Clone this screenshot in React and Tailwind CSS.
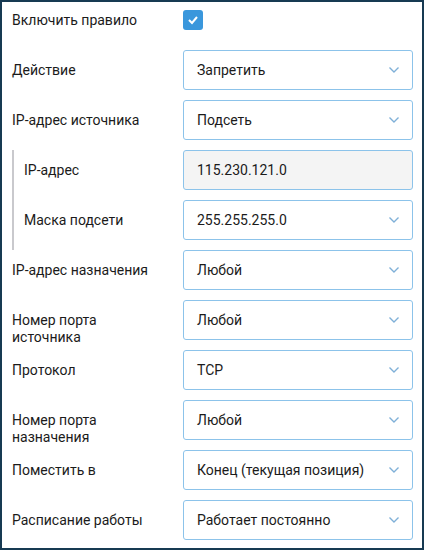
import React from 'react'

const Chevron = () => (
  <svg width="12" height="8" viewBox="0 0 12 8" className="shrink-0">
    <polyline points="1.5,1.5 6,6 10.5,1.5" fill="none" stroke="#7fb0d8" strokeWidth="1.4" />
  </svg>
)

const Select = ({ value, disabled }) => (
  <div
    className={`flex h-10 flex-1 items-center justify-between rounded-[3px] border border-[#8cc3ea] pl-[13px] pr-[12px] ${
      disabled ? 'bg-[#f4f4f4]' : 'bg-white'
    }`}
  >
    <span className="text-[14px] text-[#1b1b1b]">{value}</span>
    {!disabled && <Chevron />}
  </div>
)

const Row = ({ label, value, disabled, labelWidth = 'w-[171px]' }) => (
  <div className="flex h-[50px] items-start">
    <div className={`${labelWidth} shrink-0 pr-[16px] pt-[12px] text-[14px] leading-[17px] text-[#1b1b1b]`}>
      {label}
    </div>
    <Select value={value} disabled={disabled} />
  </div>
)

const App = () => {
  return (
    <div
      className="h-[550px] w-[424px] overflow-hidden border-2 border-[#173a52] bg-white pl-[10px] pr-[9px] pt-2"
      style={{ fontFamily: 'Roboto, "Noto Sans", sans-serif' }}
    >
      <div className="flex h-[40px] items-start">
        <div className="w-[171px] shrink-0 pt-[2px] text-[14px] leading-[17px] text-[#1b1b1b]">
          Включить правило
        </div>
        <div className="flex h-5 w-5 items-center justify-center rounded-[3px] bg-[#3a97dc]">
          <svg width="12" height="10" viewBox="0 0 12 10">
            <polyline points="2,5 5,8 10,2" fill="none" stroke="white" strokeWidth="2" />
          </svg>
        </div>
      </div>

      <Row label="Действие" value="Запретить" />
      <Row label="IP-адрес источника" value="Подсеть" />

      <div className="flex">
        <div className="w-[2px] shrink-0 bg-[#c9c9cd]" />
        <div className="flex-1 pl-[10px]">
          <Row label="IP-адрес" value="115.230.121.0" disabled labelWidth="w-[159px]" />
          <Row label="Маска подсети" value="255.255.255.0" labelWidth="w-[159px]" />
        </div>
      </div>

      <Row label="IP-адрес назначения" value="Любой" />
      <Row label="Номер порта источника" value="Любой" />
      <Row label="Протокол" value="TCP" />
      <Row label="Номер порта назначения" value="Любой" />
      <Row label="Поместить в" value="Конец (текущая позиция)" />
      <Row label="Расписание работы" value="Работает постоянно" />
    </div>
  )
}

export default App
